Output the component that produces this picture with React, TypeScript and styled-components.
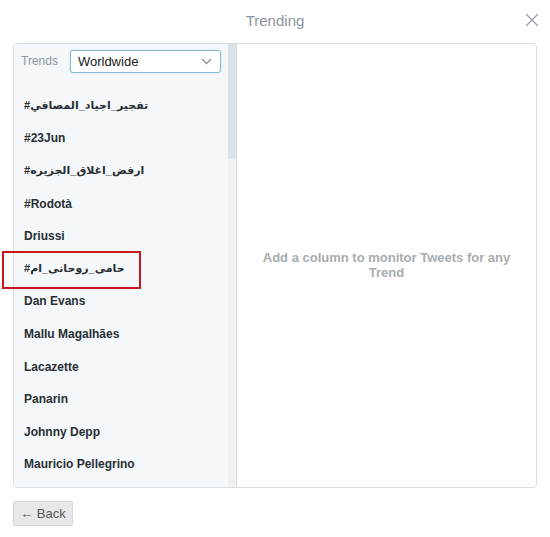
import React from "react";
import styled, { createGlobalStyle } from "styled-components";

const GlobalStyle = createGlobalStyle`
  html, body {
    margin: 0;
    padding: 0;
    background: #ffffff;
  }
  body {
    font-family: "Liberation Sans", Arial, "DejaVu Sans", sans-serif;
  }
`;

const Page = styled.div`
  position: relative;
  width: 550px;
  height: 537px;
  overflow: hidden;
`;

const TopBar = styled.div`
  position: relative;
  height: 43px;
  display: flex;
  align-items: center;
  justify-content: center;
  padding-bottom: 3px;
  box-sizing: border-box;
`;

const Title = styled.h1`
  margin: 0;
  font-size: 15px;
  font-weight: normal;
  color: #8b9298;
`;

const CloseButton = styled.button`
  position: absolute;
  right: 11px;
  top: 13px;
  width: 14px;
  height: 14px;
  padding: 0;
  border: 0;
  background: none;
  display: flex;
  cursor: pointer;
`;

const Panel = styled.div`
  margin: 0 13px;
  height: 445px;
  border: 1px solid #d9dfe3;
  border-radius: 4px;
  box-sizing: border-box;
  display: flex;
  overflow: hidden;
`;

const Sidebar = styled.aside`
  width: 222px;
  display: flex;
  background: #f5f8fa;
  border-right: 1px solid #d6dee3;
`;

const SidebarBody = styled.div`
  flex: 1;
  display: flex;
  flex-direction: column;
`;

const FilterRow = styled.div`
  height: 45.5px;
  flex-shrink: 0;
  display: flex;
  align-items: flex-start;
  padding: 6px 7px 0 7px;
  box-sizing: border-box;
  gap: 12px;
`;

const FilterLabel = styled.span`
  font-size: 12px;
  color: #8f979d;
  line-height: 22px;
`;

const SelectBox = styled.div`
  flex: 1;
  height: 23px;
  box-sizing: border-box;
  border: 1px solid #86bcd6;
  border-radius: 3px;
  background: #ffffff;
  display: flex;
  align-items: center;
  justify-content: space-between;
  padding: 0 8px 0 7px;
  font-size: 13px;
  color: #222;
  box-shadow: 0 0 2px rgba(120, 180, 215, 0.45);
`;

const TrendList = styled.ul`
  list-style: none;
  margin: 0;
  padding: 0;
`;

const TrendItem = styled.li<{ $rtl?: boolean }>`
  height: 32.6px;
  display: flex;
  align-items: center;
  padding-left: 10px;
  font-size: ${p => (p.$rtl ? "11px" : "12px")};
  font-weight: bold;
  color: #292f33;
  white-space: nowrap;
  font-family: "Liberation Sans", Arial, "DejaVu Sans", sans-serif;
`;

const ScrollTrack = styled.div`
  width: 8px;
  background: #edf1f4;
  display: flex;
  flex-direction: column;
`;

const ScrollThumb = styled.div`
  height: 115px;
  background: #dbe3e9;
`;

const Content = styled.section`
  flex: 1;
  display: flex;
  align-items: center;
  justify-content: center;
  padding-bottom: 2px;
`;

const EmptyMessage = styled.p`
  margin: 0;
  width: 256px;
  text-align: center;
  font-size: 13px;
  font-weight: bold;
  line-height: 15px;
  color: #a7acaf;
`;

const Footer = styled.div`
  padding: 13px 13px 0;
`;

const BackButton = styled.button`
  height: 25px;
  width: 60px;
  border: 1px solid #d7d7d7;
  border-radius: 2px;
  background: #e8e8e8;
  color: #555;
  font-family: "Liberation Sans", Arial, sans-serif;
  font-size: 13px;
  padding: 0;
  cursor: pointer;
`;

const Highlight = styled.div`
  position: absolute;
  left: 2px;
  top: 251px;
  width: 139px;
  height: 38px;
  box-sizing: border-box;
  border: 2px solid #c9171e;
  pointer-events: none;
`;

const trends: { label: string; rtl?: boolean }[] = [
  { label: "#تفجير_اجياد_المصافي", rtl: true },
  { label: "#23Jun" },
  { label: "#ارفض_اغلاق_الجزيره", rtl: true },
  { label: "#Rodotà" },
  { label: "Driussi" },
  { label: "#حامی_روحانی_ام", rtl: true },
  { label: "Dan Evans" },
  { label: "Mallu Magalhães" },
  { label: "Lacazette" },
  { label: "Panarin" },
  { label: "Johnny Depp" },
  { label: "Mauricio Pellegrino" },
];

const CloseIcon = () => (
  <svg width="14" height="14" viewBox="0 0 14 14">
    <path d="M1 1 L13 13 M13 1 L1 13" stroke="#9aa0a5" strokeWidth="1.3" fill="none" />
  </svg>
);

const Chevron = () => (
  <svg width="11" height="7" viewBox="0 0 11 7">
    <path d="M1 1 L5.5 5.5 L10 1" stroke="#8a8f93" strokeWidth="1.3" fill="none" />
  </svg>
);

export default function App() {
  return (
    <Page>
      <GlobalStyle />
      <TopBar>
        <Title>Trending</Title>
        <CloseButton aria-label="close">
          <CloseIcon />
        </CloseButton>
      </TopBar>
      <Panel>
        <Sidebar>
          <SidebarBody>
            <FilterRow>
              <FilterLabel>Trends</FilterLabel>
              <SelectBox>
                <span>Worldwide</span>
                <Chevron />
              </SelectBox>
            </FilterRow>
            <TrendList>
              {trends.map(t => (
                <TrendItem key={t.label} $rtl={t.rtl}>
                  {t.label}
                </TrendItem>
              ))}
            </TrendList>
          </SidebarBody>
          <ScrollTrack>
            <ScrollThumb />
          </ScrollTrack>
        </Sidebar>
        <Content>
          <EmptyMessage>Add a column to monitor Tweets for any Trend</EmptyMessage>
        </Content>
      </Panel>
      <Footer>
        <BackButton>← Back</BackButton>
      </Footer>
      <Highlight />
    </Page>
  );
}
